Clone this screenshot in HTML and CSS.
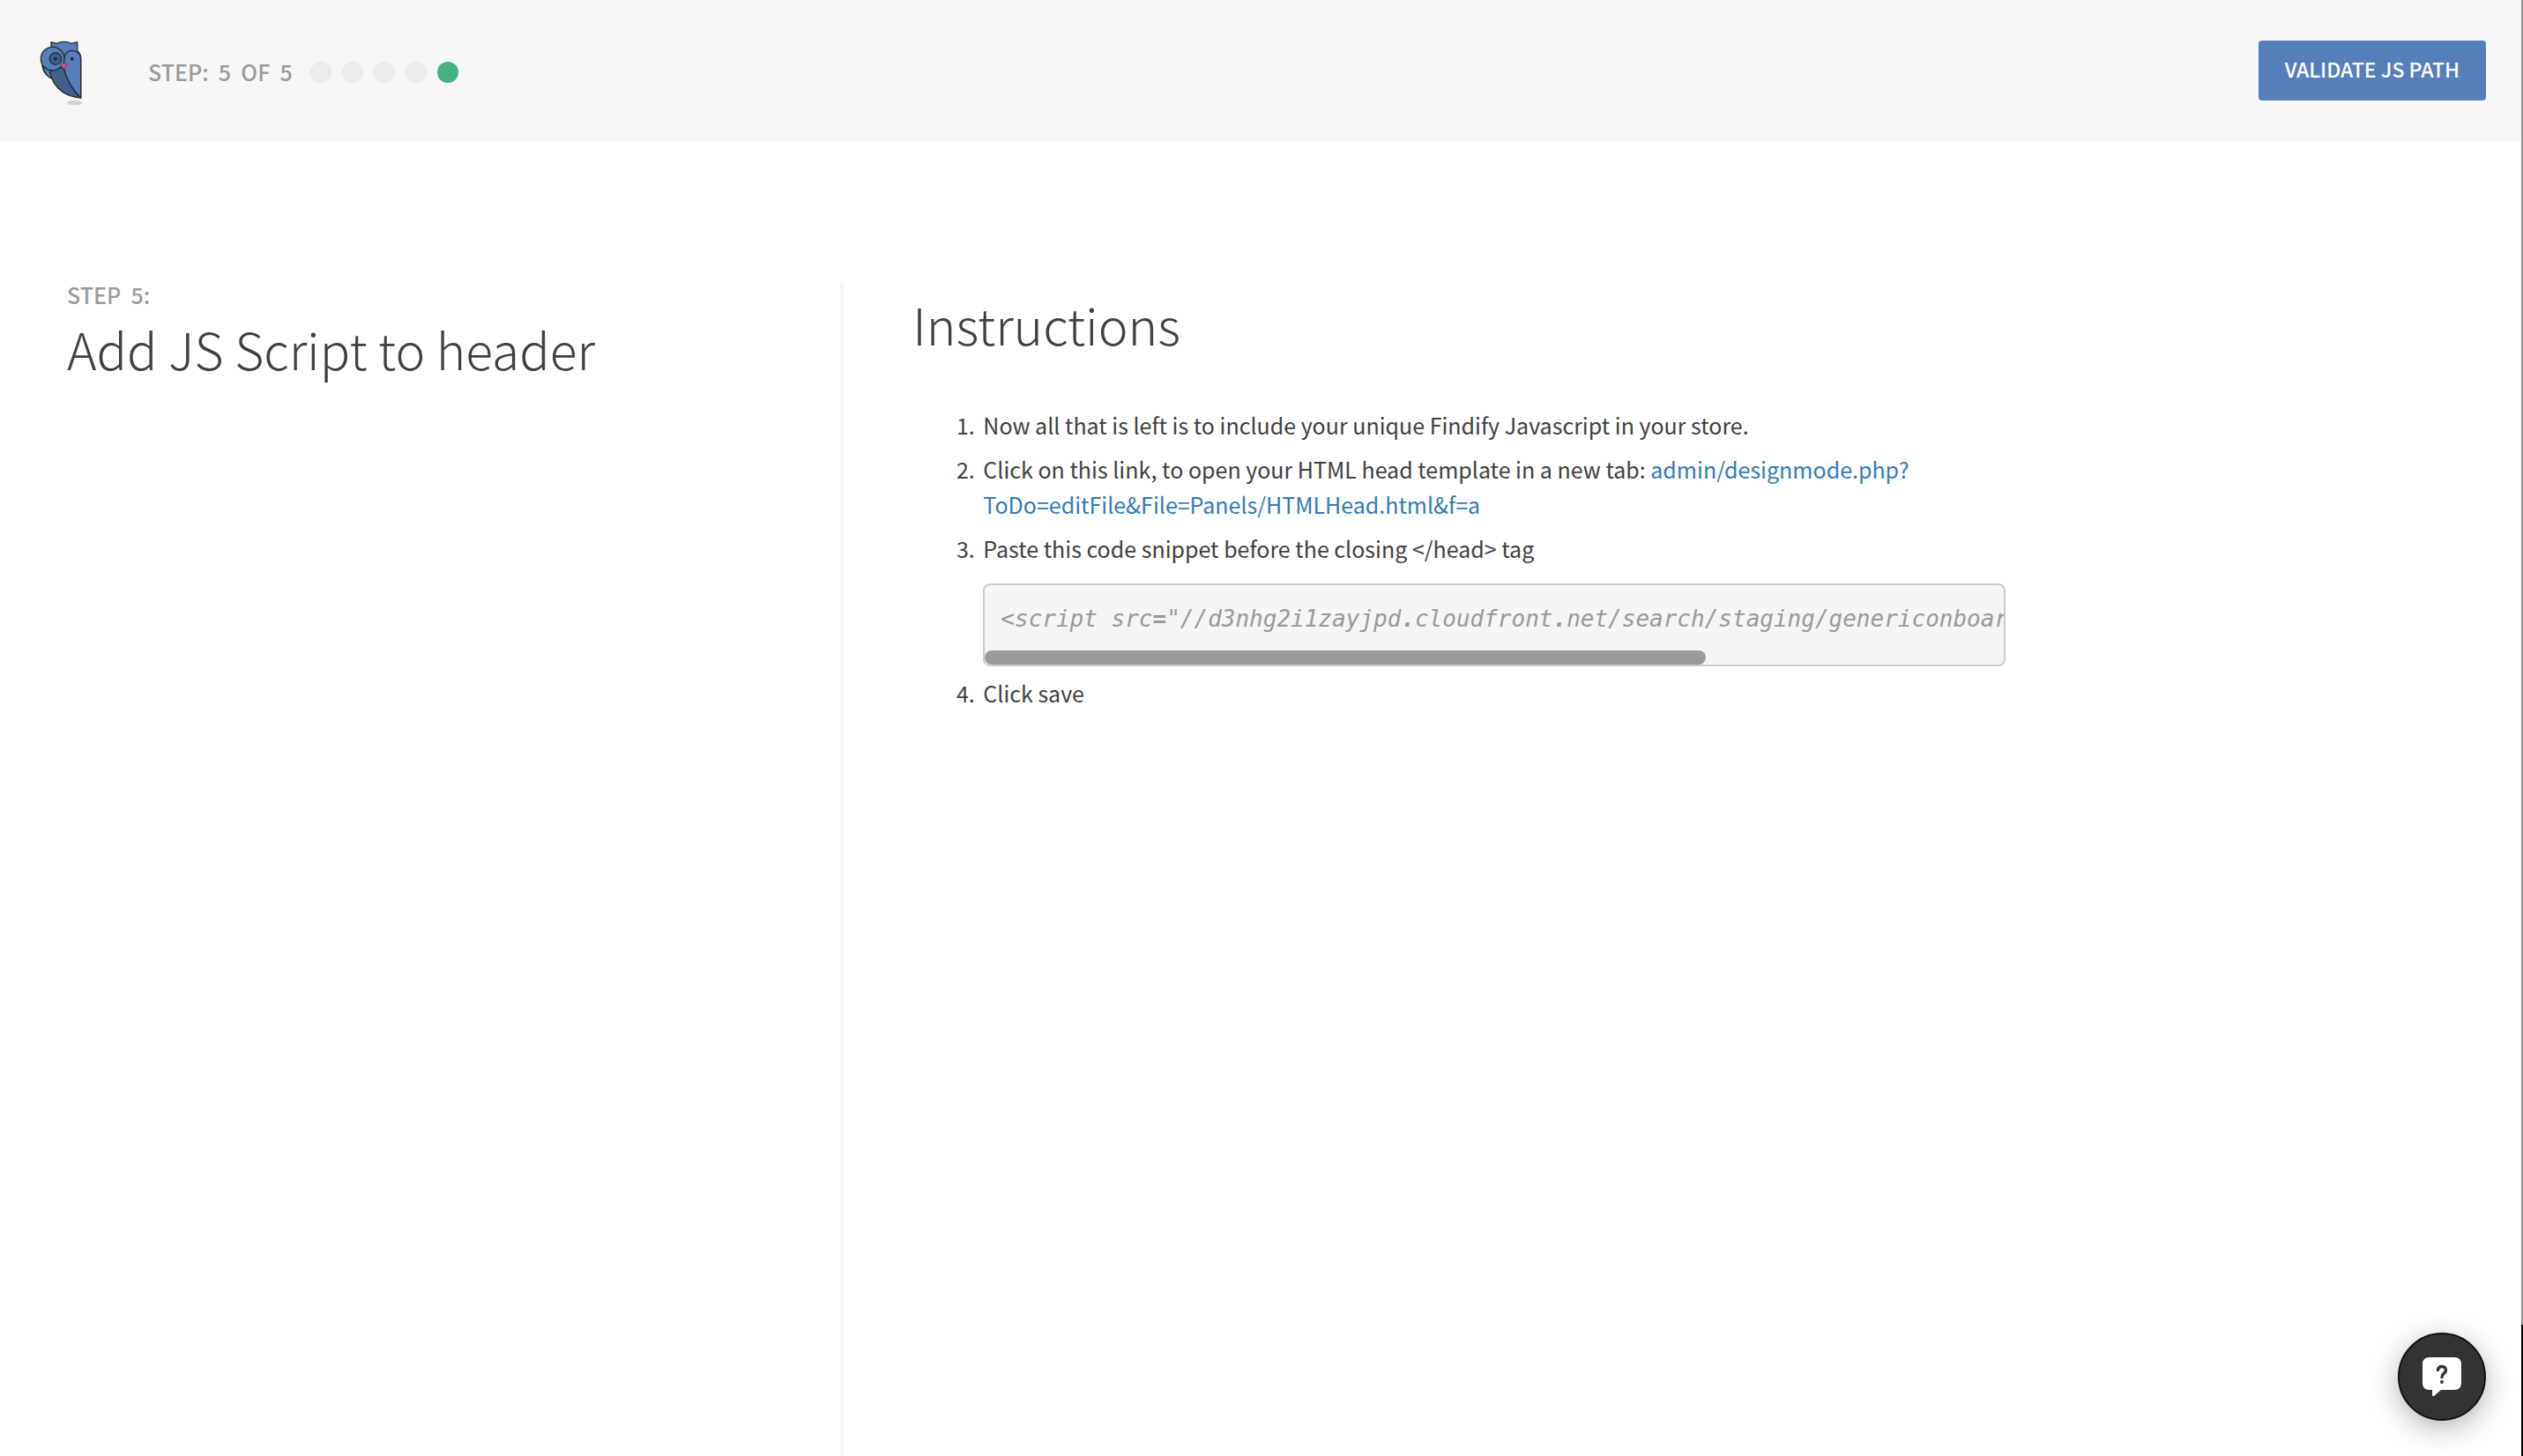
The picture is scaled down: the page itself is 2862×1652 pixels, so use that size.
FILE: index.html
```html
<!DOCTYPE html>
<html lang="en">
<head>
<meta charset="utf-8">
<meta name="viewport" content="width=device-width, initial-scale=1">
<title>Add JS Script to header</title>
<link rel="stylesheet" href="styles.css">
</head>
<body>
<header class="topbar">
  <svg class="logo" viewBox="0 0 270 300" role="img" aria-label="Findify">
    <ellipse cx="164" cy="260" rx="26" ry="8" fill="#d2d2d2"/>
    <g stroke="#262b33" stroke-width="4" stroke-linejoin="round">
      <path d="M84 74V53L102 58Q128 46 154 58L173 53V84Q185 92 185 108V243C140 226 108 200 92 176Q62 170 54 136L52 100Z" fill="#557fba"/>
      <path d="M56 136Q62 168 87 177L79 148Z" fill="#557fba"/>
      <path d="M79 146Q84 196 124 224Q150 240 185 243Q150 214 126 140Z" fill="#3f608c"/>
      <path d="M126 140Q124 84 153 82Q185 84 185 110V243Q142 202 126 140Z" fill="#557fba"/>
      <circle cx="89" cy="110" r="40" fill="#557fba"/>
      <circle cx="99" cy="110" r="20" fill="#3f608c"/>
      <path d="M117 132Q127 116 138 132Q134 140 127 144Q120 140 117 132Z" fill="#d4577d" stroke-width="2"/>
    </g>
    <circle cx="99" cy="110" r="6" fill="#262b33"/>
    <circle cx="155" cy="110" r="6" fill="#262b33"/>
  </svg>
  <p class="label progress-label">STEP:  5  OF  5</p>
  <div class="dots" role="img" aria-label="Step 5 of 5">
    <span class="dot"></span><span class="dot"></span><span class="dot"></span><span class="dot"></span><span class="dot dot-current"></span>
  </div>
  <button class="validate" type="button">VALIDATE JS PATH</button>
</header>
<main class="columns">
  <section class="intro">
    <p class="label">STEP  5:</p>
    <h1 class="title">Add JS Script to header</h1>
  </section>
  <section class="instructions">
    <div class="instructions-body">
      <h2 class="title">Instructions</h2>
      <ol class="steps">
        <li>Now all that is left is to include your unique Findify Javascript in your store.</li>
        <li>Click on this link, to open your HTML head template in a new tab: <a href="#">admin/designmode.php?<wbr>ToDo=editFile&amp;File=Panels/HTMLHead.html&amp;f=a</a></li>
        <li>Paste this code snippet before the closing &lt;/head&gt; tag
          <div class="snippet">
            <pre><code>&lt;script src<b>=</b>"//d3nhg2i1zayjpd<b>.</b>cloudfront<b>.</b>net/search/staging/genericonboar</code></pre>
            <div class="scroll-thumb"></div>
          </div>
        </li>
        <li>Click save</li>
      </ol>
    </div>
  </section>
</main>
<button class="help" type="button" aria-label="Help">
  <svg class="help-icon" viewBox="0 0 44 44" aria-hidden="true">
    <path d="M8 0H36Q44 0 44 8V29Q44 37 36 37H21L13 44Q11 45 11 42V37H8Q0 37 0 29V8Q0 0 8 0Z" fill="#fff"/>
    <path d="M17.500 14.500C17.500 9 27 9 26.500 15C26 19 22 18 22 22.500" fill="none" stroke="#333" stroke-width="3.500" stroke-linecap="round"/>
    <circle cx="22" cy="28" r="2" fill="#333"/>
  </svg>
</button>
<div class="edge"><div class="edge-thumb"></div></div>
</body>
</html>
```
FILE: styles.css
```css
* {
  box-sizing: border-box;
}

body {
  display: flex;
  flex-direction: column;
  min-height: 100vh;
  margin: 0;
  padding-right: 2px;
  background: #fff;
  color: #404040;
  font-family: "Noto Sans CJK SC", "Noto Sans", sans-serif;
  font-size: 25px;
  line-height: 40px;
}

p, h1, h2, ol, pre {
  margin: 0;
}

.topbar {
  display: flex;
  align-items: center;
  height: 160px;
  padding: 0 40px 0 30px;
  background: #f7f7f7;
}

.logo {
  width: 90px;
  height: 100px;
}

.label {
  color: #9b9b9b;
  font-weight: 500;
  line-height: 28px;
  white-space: pre;
}

.progress-label {
  margin-left: 48px;
  padding-top: 2px;
}

.dots {
  display: flex;
  gap: 12px;
  margin-left: 20px;
  padding-top: 4px;
}

.dot {
  width: 24px;
  height: 24px;
  border-radius: 50%;
  background: #ebebeb;
}

.dot-current {
  background: #45b085;
}

.validate {
  height: 68px;
  margin-left: auto;
  padding: 0 30px 4px;
  border: 0;
  border-radius: 4px;
  background: #567fba;
  color: #fff;
  font: inherit;
  font-size: 23px;
  font-weight: 500;
}

.columns {
  display: grid;
  flex: 1;
  grid-template-columns: 1fr 2fr;
  padding-top: 160px;
}

.intro {
  padding-left: 76px;
}

.title {
  font-size: 57px;
  font-weight: 300;
  line-height: 94px;
}

.instructions {
  padding: 0 78px;
  border-left: 4px solid #f7f7f7;
}

.instructions-body {
  max-width: 1240px;
}

.steps {
  display: flex;
  flex-direction: column;
  gap: 10px;
  margin-top: 48px;
  padding-left: 76px;
}

.steps li {
  padding-left: 4px;
}

.steps a {
  color: #337ab7;
  text-decoration: none;
}

.snippet {
  margin-top: 20px;
  overflow: hidden;
  border: 2px solid #ccc;
  border-radius: 8px;
  background: #f5f5f5;
}

.snippet pre {
  height: 74px;
  padding: 18px 0 0 18px;
  overflow-x: auto;
  overflow-y: hidden;
  color: #999;
  scrollbar-width: none;
}

.snippet code {
  font: italic 26px/40px "DejaVu Sans Mono", monospace;
}

.scroll-thumb {
  width: 818px;
  height: 16px;
  border-radius: 8px;
  background: #9b9b9b;
}

.help {
  position: fixed;
  right: 42px;
  bottom: 40px;
  display: grid;
  width: 100px;
  height: 100px;
  padding: 0;
  place-items: center;
  border: 2px solid #111;
  border-radius: 50%;
  background: #333;
  box-shadow: 0 8px 32px rgba(0, 0, 0, 0.3);
}

.help-icon {
  width: 44px;
  height: 44px;
}

.edge {
  position: fixed;
  top: 0;
  right: 0;
  bottom: 0;
  width: 2px;
  background: #000;
}

.edge-thumb {
  height: 91%;
  background: #999;
}
```
